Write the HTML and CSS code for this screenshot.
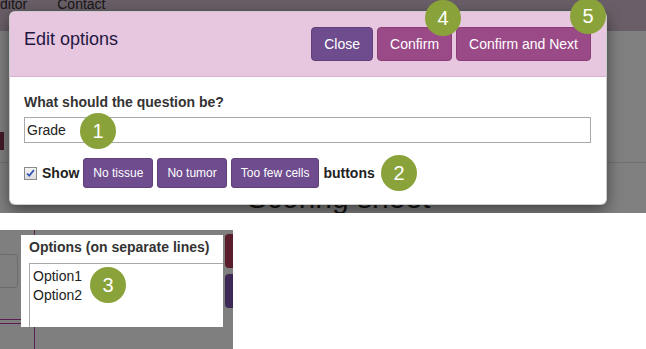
FILE: index.html
```html
<!DOCTYPE html>
<html lang="en">
<head>
<meta charset="utf-8">
<title>Edit options</title>
<link rel="stylesheet" href="styles.css">
</head>
<body>
<div class="app">
  <div class="nav">
    <div class="nav-links"><span>ditor</span><span>Contact</span></div>
  </div>
  <div class="page">
    <div class="strip"></div>
    <div class="rule"></div>
    <h1 class="sheet-title">Scoring sheet</h1>
  </div>

  <div class="modal">
    <div class="modal-header">
      <h4 class="modal-title">Edit options</h4>
      <div class="header-actions">
        <button class="btn btn-close">Close</button>
        <button class="btn btn-confirm">Confirm</button>
        <button class="btn btn-confirm">Confirm and Next</button>
      </div>
    </div>
    <div class="modal-body">
      <label class="field-label">What should the question be?</label>
      <input class="text-input" type="text" value="Grade">
      <div class="show-row">
        <span class="check"><svg viewBox="0 0 13 13" width="11" height="11"><path d="M2.5 6.5 L5 9.2 L10.5 2.5" fill="none" stroke="#2b4fb8" stroke-width="2"/></svg></span>
        <span class="show-label">Show</span>
        <button class="btn-sm">No tissue</button>
        <button class="btn-sm">No tumor</button>
        <button class="btn-sm">Too few cells</button>
        <span class="show-label">buttons</span>
      </div>
    </div>
  </div>

  <div class="badge b1">1</div>
  <div class="badge b2">2</div>
  <div class="badge b4">4</div>
  <div class="badge b5">5</div>
</div>

<div class="spacer"></div>

<div class="snippet">
  <div class="ghost-box"></div>
  <div class="vline"></div>
  <div class="hline h1"></div>
  <div class="hline h2"></div>
  <div class="peek peek-red"></div>
  <div class="peek peek-purple"></div>
  <div class="panel">
    <div class="panel-title">Options (on separate lines)</div>
    <textarea class="options">Option1
Option2</textarea>
  </div>
  <div class="badge b3">3</div>
</div>
</body>
</html>
```
FILE: styles.css
```css
* { box-sizing: border-box; }
html, body { margin: 0; }
body {
  width: 646px;
  height: 349px;
  overflow: hidden;
  background: #fff;
  font-family: "Liberation Sans", Arial, sans-serif;
  font-size: 14px;
  color: #333;
}

.app {
  position: relative;
  height: 213px;
  overflow: hidden;
  background: #808080;
}
.nav {
  height: 31px;
  background: #6a5f68;
  overflow: hidden;
}
.nav-links {
  display: flex;
  gap: 30px;
  margin-top: -6px;
  line-height: 20px;
  color: #161616;
}
.page { display: flex; flex-direction: column; }
.strip { margin-top: 101px; width: 4px; height: 18px; background: #45182a; }
.rule { margin-top: 12px; height: 1px; background: #717171; }
.sheet-title {
  margin: 18px 0 0;
  padding-left: 247px;
  font-size: 30px;
  font-weight: normal;
  line-height: 33px;
  color: #141414;
}

.modal {
  position: absolute;
  left: 9px;
  top: 11px;
  width: 598px;
  background: #fff;
  border: 1px solid rgba(0, 0, 0, .2);
  border-radius: 6px;
  box-shadow: 0 5px 15px rgba(0, 0, 0, .5);
  overflow: hidden;
}
.modal-header {
  display: flex;
  justify-content: space-between;
  align-items: flex-start;
  padding: 15px 15px 15px 14px;
  background: #e7c6df;
  border-bottom: 1px solid #dbb1d2;
}
.modal-title {
  margin: 0;
  font-size: 18px;
  font-weight: normal;
  line-height: 1.42857;
  color: #22173f;
}
.header-actions { display: flex; gap: 4px; }
.btn {
  height: 34px;
  padding: 0 12px;
  font: 14px/32px "Liberation Sans", Arial, sans-serif;
  color: #fff;
  border: 1px solid;
  border-radius: 4px;
  cursor: pointer;
}
.btn-close { background: #6e4c8e; border-color: #5f4079; }
.btn-confirm { background: #9b4a88; border-color: #8a3e78; }

.modal-body { padding: 15px 15px 16px 14px; }
.field-label {
  display: block;
  font-weight: bold;
  line-height: 20px;
  margin-bottom: 5px;
  color: #333;
}
.text-input {
  display: block;
  width: 100%;
  height: 26px;
  margin: 0;
  border: 1px solid #a9a9a9;
  padding: 0 2px;
  font: 14px "Liberation Sans", Arial, sans-serif;
  color: #222;
  outline: none;
}
.show-row {
  display: flex;
  align-items: center;
  margin-top: 15px;
}
.check {
  display: flex;
  align-items: center;
  justify-content: center;
  width: 13px;
  height: 13px;
  margin-right: 5px;
  border: 1px solid #8a8a8a;
  background: linear-gradient(#f4f4f4, #dcdcdc);
}
.show-label { font-weight: bold; color: #222; margin-right: 4px; }
.btn-sm {
  height: 30px;
  padding: 0 9px;
  margin-right: 4px;
  font: 12px/28px "Liberation Sans", Arial, sans-serif;
  color: #fff;
  background: #6e4c8e;
  border: 1px solid #5f4079;
  border-radius: 3px;
}

.badge {
  position: absolute;
  z-index: 5;
  width: 36px;
  height: 36px;
  border-radius: 50%;
  background: #89a23a;
  color: #fff;
  font-size: 20px;
  line-height: 36px;
  text-align: center;
}
.b1 { left: 80px; top: 113px; }
.b2 { left: 381px; top: 155px; }
.b4 { left: 425px; top: 0; }
.b5 { left: 570px; top: -2px; }
.b3 { left: 90px; top: 37px; }

.spacer { height: 17px; }

.snippet {
  position: relative;
  width: 233px;
  height: 119px;
  padding: 5px 0 0 21px;
  background: #7f7f7f;
  overflow: hidden;
}
.ghost-box {
  position: absolute;
  left: -30px;
  top: 24px;
  width: 48px;
  height: 34px;
  border: 1px solid #6b6b6b;
  border-radius: 4px;
}
.vline { position: absolute; left: 34px; top: 0; bottom: 0; width: 1px; background: #5b1f52; }
.hline { position: absolute; left: 0; width: 24px; height: 1px; background: #5b1f52; }
.h1 { top: 89px; }
.h2 { top: 93px; }
.peek { position: absolute; left: 225px; width: 20px; height: 34px; border-radius: 4px; }
.peek-red { top: 4px; background: #5a1c2b; }
.peek-purple { top: 44px; background: #3e2956; }

.panel {
  position: relative;
  z-index: 1;
  width: 202px;
  height: 92px;
  padding: 2px 0 0 8px;
  background: #fff;
  overflow: hidden;
}
.panel-title { font-weight: bold; line-height: 20px; color: #333; }
.options {
  display: block;
  margin: 6px 0 0;
  width: 200px;
  height: 80px;
  padding: 3px 3px;
  border: 1px solid #a9a9a9;
  font: 14px/19px "Liberation Sans", Arial, sans-serif;
  color: #222;
  resize: none;
  overflow: hidden;
  outline: none;
}
```
